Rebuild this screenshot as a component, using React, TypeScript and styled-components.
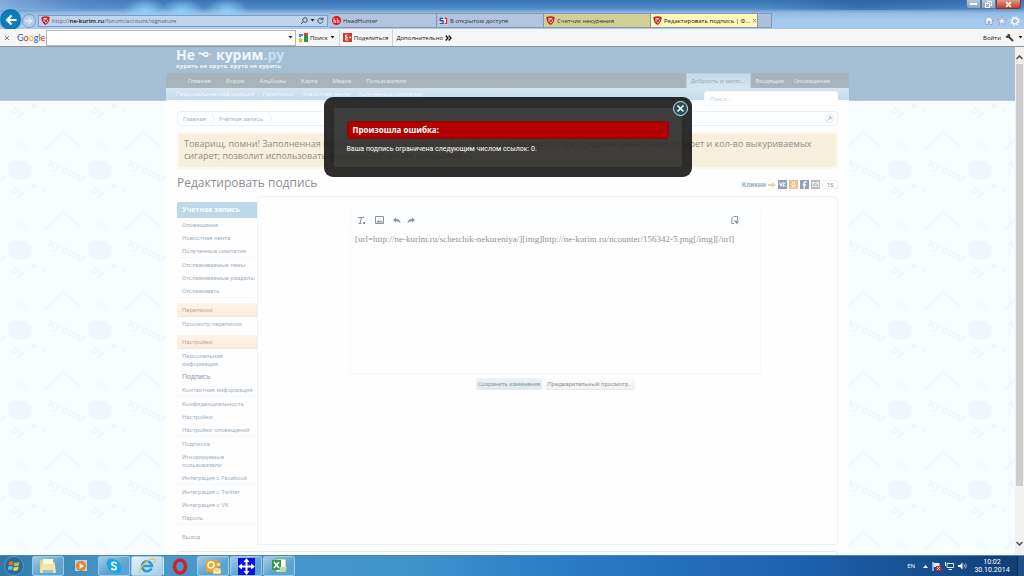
import React from 'react';
import styled, { createGlobalStyle, css } from 'styled-components';

const ui = `"Open Sans", "Noto Sans", sans-serif`;
const site = `Roboto, "Open Sans", sans-serif`;

const GlobalStyle = createGlobalStyle`
  *, *::before, *::after { box-sizing: border-box; }
  body { margin: 0; font-family: ${ui}; font-size: 6px; line-height: 8px; color: #222; }
  button, input, textarea { font: inherit; color: inherit; margin: 0; padding: 0; border: 0; background: none; outline: 0; }
  ul { list-style: none; margin: 0; padding: 0; }
  a { color: inherit; text-decoration: none; }
  h1, h2, h3, p { margin: 0; font-size: inherit; font-weight: 400; }
  svg { display: block; flex: none; }
`;

const Desktop = styled.div`
  display: flex;
  flex-direction: column;
  height: 100vh;
  overflow: hidden;
`;

/* ---------- browser frame ---------- */

const Chrome = styled.header`
  background:
    radial-gradient(ellipse 22px 14px at 145px 12px, #8fd0f6 0, transparent 100%),
    radial-gradient(ellipse 22px 14px at 182px 12px, #8fd0f6 0, transparent 100%),
    radial-gradient(ellipse 22px 14px at 227px 12px, #8fd0f6 0, transparent 100%),
    linear-gradient(90deg, rgba(160, 190, 235, 0.7) 0, rgba(120, 165, 220, 0.3) 80px, transparent 180px, transparent 75%, rgba(20, 55, 120, 0.3) 84%, transparent 100%) 0 0 / 100% 10px no-repeat,
    linear-gradient(#3a74b4 0, #4c88c6 8px, #93bbe6 13px, #a5c8ee 20px, #a9c9ec 100%);
`;

const TitleBar = styled.div`
  display: flex;
  justify-content: flex-end;
  height: 13px;
  padding-right: 3px;
`;

const WindowButton = styled.button<{ $close?: boolean }>`
  display: flex;
  align-items: center;
  justify-content: center;
  width: ${p => (p.$close ? 25 : 15)}px;
  height: 9px;
  border: 1px solid ${p => (p.$close ? '#7c3a35' : '#5d7895')};
  border-top: 0;
  background: ${p => (p.$close ? 'linear-gradient(#e0988a, #c33f28)' : 'linear-gradient(#b4c8de, #86a3c4)')};
  &:first-child { border-radius: 0 0 0 3px; }
  &:last-child { border-radius: 0 0 3px 0; }
`;

const NavRow = styled.div`
  display: flex;
  align-items: center;
  height: 16px;
  padding-bottom: 1px;
`;

const BackButton = styled.button`
  width: 21px;
  height: 21px;
  flex: none;
  margin: -4px 0 -2px;
  border-radius: 50%;
  background: radial-gradient(#1888c4, #0b6aa8);
  box-shadow: 0 0 0 1px #7fb2dc;
  display: grid;
  place-items: center;
`;

const ForwardButton = styled.button`
  width: 14px;
  height: 14px;
  flex: none;
  margin: 0 2px 0 1px;
  border: 1px solid #7b98bb;
  border-radius: 50%;
  background: #b2cdec;
  display: grid;
  place-items: center;
`;

const AddressBar = styled.form`
  display: flex;
  align-items: center;
  gap: 2px;
  width: 290px;
  height: 12px;
  padding: 0 3px 0 2px;
  border: 1px solid #7d9dc4;
  background: #bfd4ed;
`;

const AddressField = styled.label`
  position: relative;
  flex: 1;
  height: 10px;
  line-height: 10px;
  font-size: 6px;
  color: #56657a;
  b { color: #111; font-weight: 600; }
  input { position: absolute; inset: 0; width: 100%; color: transparent; }
`;

const Tabs = styled.div`
  display: flex;
  margin-left: 2px;
  height: 15px;
`;

const Tab = styled.button<{ $tone?: 'olive' | 'active' }>`
  display: flex;
  align-items: center;
  gap: 2px;
  width: 107px;
  padding: 0 2px;
  border: 1px solid #8798b3;
  border-left-width: 0;
  background: #b3c5de;
  color: #2b2f38;
  text-align: left;
  white-space: nowrap;
  ${p => p.$tone === 'olive' && css`background: #d0d092;`}
  ${p => p.$tone === 'active' && css`background: #fdf8b8; color: #111;`}
`;

const NewTab = styled.button`
  width: 14px;
  border: 1px solid #8798b3;
  border-left: 0;
  background: #adc0dc;
`;

const Tools = styled.div`
  display: flex;
  gap: 3px;
  margin-left: auto;
  padding-right: 4px;
`;

const IconButton = styled.button`
  display: grid;
  place-items: center;
`;

const GoogleBar = styled.div`
  display: flex;
  align-items: center;
  height: 18px;
  padding: 0 1px 0 4px;
  border-bottom: 1px solid #8c969f;
  background: #f6f6f6;
  color: #111;
  white-space: nowrap;
`;

const GoogleLogo = styled.span`
  width: 27px;
  margin: 0 2px 0 7px;
  font-family: Lato, sans-serif;
  font-size: 9px;
  line-height: 12px;
`;

const Tint = styled.span<{ $c: string }>`
  color: ${p => p.$c};
`;

const GoogleField = styled.label`
  display: flex;
  align-items: center;
  width: 250px;
  height: 16px;
  padding-right: 2px;
  border: 1px solid #b4b8bc;
  background: #fff;
  input { flex: 1; }
`;

const BarButton = styled.button`
  display: flex;
  align-items: center;
  gap: 2px;
  height: 16px;
  padding: 0 4px 0 3px;
  border-right: 1px solid #d0d0d0;
  &:last-of-type { border: 0; }
`;

const SignIn = styled.div`
  display: flex;
  align-items: center;
  gap: 4px;
  margin-left: auto;
`;

/* ---------- page ---------- */

const Viewport = styled.div`
  flex: 1;
  display: flex;
  min-height: 0;
`;

const Page = styled.main`
  position: relative;
  flex: 1;
  overflow: hidden;
  background: #f8fdff;
`;

const Wallpaper = styled.svg`
  position: absolute;
  inset: 54px 0 0;
  width: 100%;
  height: 100%;
`;

const Band = styled.div`
  position: absolute;
  inset: 0 0 auto;
  height: 54px;
  background: #a4bfd4;
  border-bottom: 1px solid #b4cbdc;
`;

const Site = styled.div`
  position: relative;
  max-width: 683px;
  margin: 0 auto;
  font-family: ${site};
`;

const Logo = styled.div`
  height: 26px;
  padding: 0 10px;
  color: #f2f8fc;
`;

const LogoName = styled.div`
  display: flex;
  align-items: center;
  gap: 3px;
  font: 700 14px/15px ${ui};
  span { color: #c9e0f0; }
`;

const Slogan = styled.div`
  font: 700 6px/8px ${ui};
`;

const MainNav = styled.nav`
  display: flex;
  justify-content: space-between;
  height: 15px;
  padding: 0 19px 0 22px;
  border-radius: 3px 3px 0 0;
  background: #a8b4bc;
  color: #dde8ef;
  line-height: 15px;
  white-space: nowrap;
`;

const NavLinks = styled.div`
  display: flex;
  gap: 15px;
`;

const UserLinks = styled.div`
  display: flex;
  gap: 10px;
`;

const UserName = styled.a`
  width: 65px;
  margin-right: -5px;
  border: 1px solid #b9cfdd;
  border-bottom: 0;
  background: linear-gradient(#c4dae9, #d5e6f2);
  color: #8fa6b8;
  font-family: ${ui};
  text-align: center;
`;

const SubNav = styled.div`
  display: flex;
  justify-content: space-between;
  height: 12px;
  padding: 0 11px 0 10px;
  background: linear-gradient(#d5e6f2, #c4dced);
  color: #fcfeff;
  line-height: 12px;
`;

const SubLinks = styled.div`
  display: flex;
  gap: 8px;
  text-shadow: 0 0 1px #a9c4d8;
`;

const SearchBox = styled.input`
  position: relative;
  width: 134px;
  height: 15px;
  margin-top: 3px;
  padding: 2px 5px;
  border: 1px solid #f2f8fc;
  border-radius: 3px;
  background: #fff;
  font-style: italic;
  &::placeholder { color: #c8d2da; opacity: 1; }
`;

const Sheet = styled.div`
  padding: 11px 11px 0;
  background: #fefefe;
  height: 100vh;
`;

const Crumbs = styled.nav`
  display: flex;
  align-items: center;
  height: 15px;
  padding: 0 3px 0 5px;
  border: 1px solid #e8f1f7;
  border-radius: 3px;
  background: #fcfeff;
  color: #a4b8c8;
`;

const Crumb = styled.a`
  display: flex;
  align-items: center;
  gap: 5px;
  margin-right: 4px;
`;

const CrumbJump = styled.button`
  margin-left: auto;
  width: 9px;
  height: 9px;
  border: 1px solid #dfeaf2;
  border-radius: 50%;
  display: grid;
  place-items: center;
`;

const Notice = styled.p`
  margin-top: 6px;
  padding: 4px 5px 5px;
  border: 2px solid #fcf8ee;
  background: linear-gradient(#f8f0dc, #f5efdd);
  color: #8f8c86;
  font-family: ${ui};
  font-size: 9px;
  line-height: 12px;
  white-space: nowrap;
  overflow: hidden;
  a { color: #a9c3d6; }
`;

const TitleRow = styled.div`
  display: flex;
  align-items: center;
  justify-content: space-between;
  margin: 3px 0 2px;
  height: 22px;
`;

const Title = styled.h1`
  color: #8d9094;
  font-family: ${ui};
  font-size: 12px;
  line-height: 16px;
`;

const Share = styled.div`
  display: flex;
  align-items: center;
  gap: 2px;
  padding-top: 3px;
  color: #9bb2c6;
  font-size: 7px;
`;

const ShareButton = styled.button<{ $c: string }>`
  display: grid;
  place-items: center;
  width: 9px;
  height: 9px;
  background: ${p => p.$c};
`;

const ShareCount = styled.span`
  width: 16px;
  border: 1px solid #edf0f2;
  font-size: 6px;
  line-height: 7px;
  text-align: center;
  color: #888;
`;

const Columns = styled.div`
  display: flex;
  height: 349px;
`;

const Side = styled.aside`
  width: 80px;
  padding-top: 6px;
  color: #a3b3c2;
`;

const SideTitle = styled.h2`
  padding-left: 5px;
  border-radius: 2px 0 0 0;
  background: #bcd8e9;
  color: #fff;
  font-family: ${ui};
  font-size: 7px;
  font-weight: 700;
  line-height: 16px;
`;

const SideHeading = styled.h3`
  margin-top: 5px;
  padding-left: 5px;
  border-bottom: 1px solid #fbe3d0;
  background: linear-gradient(#fef4e9, #fdebdd);
  color: #c2ab98;
  line-height: 13px;
`;

const SideItem = styled.li<{ $current?: boolean }>`
  padding: 3px 0 2px 5px;
  &:nth-child(3n) { border-bottom: 1px solid #f5f9fc; }
  ${p => p.$current && css`font-size: 7px; color: #8fa0b0;`}
`;

const Logout = styled.a`
  display: block;
  margin-top: 8px;
  padding-left: 5px;
`;

const Content = styled.form`
  flex: 1;
  padding: 12px 76px 0 92px;
  border: 1px solid #e9f2f8;
  border-radius: 5px 5px 3px 0;
`;

const Editor = styled.div`
  border: 1px solid #f6fafc;
  border-bottom-color: #f1f5f8;
  height: 165px;
`;

const Toolbar = styled.div`
  display: flex;
  align-items: center;
  justify-content: space-between;
  height: 20px;
  padding: 0 21px 0 6px;
  background: #fbfdff;
`;

const ToolGroup = styled.div`
  display: flex;
  align-items: center;
  gap: 9px;
`;

const HistoryTools = styled.div`
  display: flex;
  gap: 6px;
`;

const EditorText = styled.textarea`
  display: block;
  width: 100%;
  height: 120px;
  padding: 3px 4px;
  resize: none;
  overflow: hidden;
  color: #929292;
  font: 9px/12px "Liberation Serif", serif;
`;

const Actions = styled.div`
  display: flex;
  justify-content: center;
  gap: 3px;
  margin-top: 4px;
`;

const ActionButton = styled.button<{ $primary?: boolean }>`
  height: 11px;
  padding: 0 2px;
  border-radius: 3px;
  background: ${p => (p.$primary ? 'linear-gradient(#eaf4f8, #dbe9f3)' : 'linear-gradient(#fcfcfc, #f1f1f1)')};
  box-shadow: 0 1px 1px #e3e8ec;
  color: #8d969e;
  white-space: nowrap;
`;

const Footer = styled.div`
  margin-top: 6px;
  height: 12px;
  border: 1px solid #e3eaf0;
  border-radius: 3px;
`;

const Dialog = styled.section`
  position: absolute;
  top: 50px;
  left: 0;
  right: 0;
  width: 368px;
  height: 80px;
  margin: 0 auto;
  padding: 11px 10px 10px;
  border-radius: 9px;
  background: rgba(14, 14, 14, 0.87);
  color: #fff;
`;

const DialogBody = styled.div`
  height: 59px;
  padding: 13px;
  background: rgba(110, 110, 106, 0.25);
`;

const DialogTitle = styled.h2`
  height: 18px;
  margin-bottom: 5px;
  padding-left: 5px;
  border: 1px solid #7c0c0c;
  border-radius: 3px;
  background: #b20000;
  font-size: 8px;
  font-weight: 700;
  line-height: 16px;
`;

const DialogText = styled.p`
  font-family: ${site};
  font-size: 7px;
  line-height: 10px;
  white-space: nowrap;
`;

const CloseButton = styled.button`
  position: absolute;
  top: 4px;
  right: 4px;
  width: 15px;
  height: 15px;
  border: 1px solid #dce8ec;
  border-radius: 50%;
  background: #23505c;
  display: grid;
  place-items: center;
`;

const Scrollbar = styled.div`
  display: flex;
  flex-direction: column;
  align-items: center;
  width: 9px;
  padding: 8px 0 9px;
  gap: 4px;
  background: #f1f1f1;
`;

const Thumb = styled.div`
  width: 7px;
  height: 422px;
  margin-bottom: auto;
  background: #cdcdcd;
`;

/* ---------- taskbar ---------- */

const Taskbar = styled.footer`
  display: flex;
  align-items: center;
  height: 21px;
  border-top: 1px solid #4c86b4;
  background: linear-gradient(90deg, #2f79a8 0, #4a9ac8 12%, #3f94cc 40%, #2a7cc4 55%, #1d61ae 78%, #17508f 90%, #103d74 100%);
  color: #fff;
`;

const Start = styled.button`
  display: grid;
  place-items: center;
  width: 32px;
  padding-right: 4px;
`;

const Task = styled.button<{ $open?: boolean; $active?: boolean }>`
  display: grid;
  place-items: center;
  width: 32px;
  height: 20px;
  margin-right: 1px;
  border: 1px solid transparent;
  ${p => p.$open && css`
    border-color: #9cc9e4;
    border-radius: 2px;
    background: linear-gradient(150deg, #a4cce4, #5ba3d0 60%);
  `}
  ${p => p.$active && css`
    background: linear-gradient(150deg, #e6f3fa, #a2cde6);
    box-shadow: 2px 0 0 -1px #cfe6f3;
  `}
`;

const Tray = styled.div`
  display: flex;
  align-items: center;
  gap: 4px;
  margin-left: auto;
`;

const Language = styled.span`
  margin-right: 4px;
`;

const Clock = styled.time`
  width: 42px;
  text-align: center;
  font-family: ${site};
  font-size: 7px;
  line-height: 8px;
`;

const ShowDesktop = styled.button`
  width: 7px;
  height: 20px;
  border-left: 1px solid #0b2c56;
  background: #1f4f86;
`;

/* ---------- drawings ---------- */

const Shield = () => (
  <svg width="9" height="9" viewBox="0 0 9 9">
    <path d="M.5 1Q4.500-.5 8.500 1Q9 6.500 4.500 9Q0 6.500.5 1Z" fill="#cc2118" />
    <path d="M2 2.500Q4 1 6.500 2.300L3 6Q2 4.500 2 2.500ZM7.300 3Q7.300 6 4.500 7.500L3.800 6.800Z" fill="#f0d8d0" />
    <path d="M1.500 2.600 6.500 6" stroke="#8d2018" strokeWidth=".8" />
  </svg>
);

const Arrow = () => (
  <svg width="5" height="3" viewBox="0 0 5 3"><path d="M.5 0h4L2.500 2.500Z" fill="#222" /></svg>
);

const BackArrow = ({ size, color }: { size: number; color: string }) => (
  <svg width={size} height={size} viewBox="0 0 12 12" fill="none" stroke={color} strokeWidth="2">
    <path d="M6.500 1.500 2 6l4.500 4.500M2 6h9.500" />
  </svg>
);

const Cross = ({ size, color, width = 1 }: { size: number; color: string; width?: number }) => (
  <svg width={size} height={size} viewBox="0 0 6 6" stroke={color} strokeWidth={width}><path d="M1 1 5 5M5 1 1 5" /></svg>
);

const Curl = ({ flip }: { flip?: boolean }) => (
  <svg width="8" height="7" viewBox="0 0 8 7">
    <path d={flip ? 'M8 3 5 .5V2Q1 2 .5 6Q2.500 4 5 4.200V5.500Z' : 'M0 3 3 .5V2Q7 2 7.500 6Q5.500 4 3 4.200V5.500Z'} fill="#8d9499" />
  </svg>
);

const tabs: { text: string; icon: 'hh' | 'sj' | 'shield'; tone?: 'olive' | 'active' }[] = [
  { text: 'HeadHunter', icon: 'hh' },
  { text: 'В открытом доступе', icon: 'sj' },
  { text: 'Счетчик некурения', icon: 'shield', tone: 'olive' },
  { text: 'Редактировать подпись | Ф...', icon: 'shield', tone: 'active' },
];

const TabIcon = ({ kind }: { kind: 'hh' | 'sj' | 'shield' }) => {
  if (kind === 'shield') return <Shield />;
  if (kind === 'hh')
    return (
      <svg width="9" height="9" viewBox="0 0 9 9">
        <circle cx="4.500" cy="4.500" r="4.500" fill="#e1121d" />
        <path d="M2 2v5M2 4.500h1.500V7M5.300 2v5M5.300 4.500h1.500V7" stroke="#fff" fill="none" strokeWidth=".8" />
      </svg>
    );
  return (
    <svg width="9" height="8" viewBox="0 0 9 8" fill="none" strokeWidth="1.400">
      <path d="M0 0h9v8H0Z" fill="#e6edf6" />
      <path d="M4.300 1.200H1.200V3.800H4V6.600H.5" stroke="#1c56a8" />
      <path d="M5.500 1.200H7.700V6.600H5.500" stroke="#d8262c" />
    </svg>
  );
};

const account = ['Оповещения', 'Новостная лента', 'Полученные симпатии', 'Отслеживаемые темы', 'Отслеживаемые разделы', 'Отслеживать'];
const settings = ['Персональная информация', 'Подпись', 'Контактная информация', 'Конфиденциальность', 'Настройки', 'Настройки оповещений', 'Подписка', 'Игнорируемые пользователи', 'Интеграция с Facebook', 'Интеграция с Twitter', 'Интеграция с VK', 'Пароль'];

const SideList = ({ items }: { items: string[] }) => (
  <ul>
    {items.map(t => (
      <SideItem key={t} $current={t === 'Подпись'}><a href="#item">{t}</a></SideItem>
    ))}
  </ul>
);

const BrowserFrame = () => (
  <>
    <Chrome>
      <TitleBar>
        <WindowButton aria-label="Свернуть"><svg width="7" height="3"><path d="M0 0h7v2H0Z" fill="#fff" /></svg></WindowButton>
        <WindowButton aria-label="Развернуть">
          <svg width="7" height="7" viewBox="0 0 7 7" fill="none" stroke="#fff"><path d="M2.500 2V.5h4v4H5M.5 2.500h4v4h-4Z" /></svg>
        </WindowButton>
        <WindowButton $close aria-label="Закрыть"><Cross size={7} color="#fff" width={1.4} /></WindowButton>
      </TitleBar>
      <NavRow>
        <BackButton aria-label="Назад"><BackArrow size={12} color="#fff" /></BackButton>
        <ForwardButton aria-label="Вперёд">
          <svg width="8" height="8" viewBox="0 0 12 12" fill="none" stroke="#dfeaf7" strokeWidth="2"><path d="M5.500 1.500 10 6l-4.500 4.500M10 6H.5" /></svg>
        </ForwardButton>
        <AddressBar>
          <Shield />
          <AddressField>
            http://<b>ne-kurim.ru</b>/forum/account/signature
            <input aria-label="Адрес" />
          </AddressField>
          <svg width="8" height="8" viewBox="0 0 8 8" fill="none" stroke="#3e5068"><circle cx="5" cy="3" r="2.300" /><path d="M3.300 4.700.8 7.200" /></svg>
          <Arrow />
          <svg width="7" height="7" viewBox="0 0 7 7" fill="none" stroke="#3e5068"><path d="M5.800 2.500A2.600 2.600 0 1 0 6 4.300M6 .3V2.700H3.700" /></svg>
        </AddressBar>
        <Tabs>
          {tabs.map(t => (
            <Tab key={t.text} $tone={t.tone}>
              <TabIcon kind={t.icon} />
              {t.text}
              {t.tone === 'active' && <Cross size={5} color="#777" />}
            </Tab>
          ))}
          <NewTab aria-label="Новая вкладка" />
        </Tabs>
        <Tools>
          <IconButton aria-label="Домой"><svg width="10" height="9" viewBox="0 0 10 9" fill="#f2f6fb" stroke="#7890ae" strokeWidth=".6"><path d="M5 .5 9.500 4.500H8.200V8.500H6V5.500H4V8.500H1.800V4.500H.5Z" /></svg></IconButton>
          <IconButton aria-label="Избранное"><svg width="10" height="9" viewBox="0 0 10 9" fill="#f2f6fb" stroke="#7890ae" strokeWidth=".6"><path d="M5 .4 6.200 3.400 9.600 3.500 7 5.500 7.900 8.600 5 6.900 2.100 8.600 3 5.500.4 3.500 3.800 3.400Z" /></svg></IconButton>
          <IconButton aria-label="Сервис"><svg width="10" height="10" viewBox="0 0 10 10" fill="none"><circle cx="5" cy="5" r="4" stroke="#f2f6fb" strokeWidth="1.400" strokeDasharray="1.600 1.540" /><circle cx="5" cy="5" r="2.600" stroke="#f2f6fb" strokeWidth="1.700" /><circle cx="5" cy="5" r="1.500" stroke="#7890ae" strokeWidth=".5" /></svg></IconButton>
        </Tools>
      </NavRow>
    </Chrome>
    <GoogleBar>
      <IconButton aria-label="Закрыть панель"><Cross size={6} color="#666" width={0.8} /></IconButton>
      <GoogleLogo>
        <Tint $c="#2a5bd0">G</Tint><Tint $c="#d8301e">o</Tint><Tint $c="#e9b010">o</Tint><Tint $c="#2a5bd0">g</Tint><Tint $c="#2a9a3a">l</Tint><Tint $c="#d8301e">e</Tint>
      </GoogleLogo>
      <GoogleField><input aria-label="Поиск Google" /><Arrow /></GoogleField>
      <BarButton>
        <svg width="9" height="9" viewBox="0 0 9 9"><path d="M0 1h4v3H0Z" fill="#3b8ae8" /><path d="M5 0h4v3H5Z" fill="#e23c2a" /><path d="M0 5h3v4H0Z" fill="#f2b90e" /><path d="M5 3h4v6H5Z" fill="#1f9a45" /><path d="M2 3h3v3H2Z" fill="#fff" /></svg>
        Поиск<Arrow />
      </BarButton>
      <BarButton>
        <svg width="9" height="9" viewBox="0 0 9 9"><path d="M0 0h9v9H0Z" fill="#d03a28" /><path d="M4.500 2H2.500v2h2v1h-2v2h3M6.200 4.500h2M7.200 3.500v2" fill="none" stroke="#fff" strokeWidth=".9" /></svg>
        Поделиться
      </BarButton>
      <BarButton>
        Дополнительно
        <svg width="7" height="6" viewBox="0 0 7 6" fill="none" stroke="#111" strokeWidth="1.300"><path d="M.7.5 3 3 .7 5.500M3.700.5 6 3 3.700 5.500" /></svg>
      </BarButton>
      <SignIn>
        <a href="#signin">Войти</a>
        <svg width="9" height="9" viewBox="0 0 9 9"><circle cx="3" cy="3" r="2.300" fill="#444" /><path d="M3 3 8 8" stroke="#444" strokeWidth="2" /><path d="M0 0 3 .5 2.500 2.500.5 3Z" fill="#f6f6f6" /></svg>
        <Arrow />
      </SignIn>
    </GoogleBar>
  </>
);

const WallpaperTile = () => (
  <Wallpaper aria-hidden="true">
    <defs>
      <pattern id="tile" width="80" height="80" patternUnits="userSpaceOnUse">
        <path d="M45 48 63 31 83 48" fill="none" stroke="#f1f7fa" strokeWidth="3" />
        <path d="M9 62q5-4 10-2q8-2 10 3q6 3 2 9q1 6-6 5q-6 4-10 0q-8 0-6-7q-3-4 0-8Z" fill="#eff6fe" />
        <g fill="#eff6f9" fontFamily="Open Sans, sans-serif" fontWeight="700">
          <text transform="translate(47 64) rotate(27)" fontSize="12">курим</text>
          <text transform="translate(-33 64) rotate(27)" fontSize="12">курим</text>
          <text transform="translate(8 9) rotate(27)" fontSize="11">.ру</text>
          <text transform="translate(15 44) rotate(27)" fontSize="9" fill="#f2f9fc">Не</text>
        </g>
        <path d="M34 2l4 3-4 3-4-3ZM42 7l5 2-3 3Z" fill="#f0f7fb" />
      </pattern>
    </defs>
    <rect width="100%" height="100%" fill="url(#tile)" />
  </Wallpaper>
);

const ForumPage = () => (
  <Page>
    <WallpaperTile />
    <Band />
    <Site>
      <Logo>
        <LogoName>
          Не
          <svg width="15" height="7" viewBox="0 0 14 7" fill="none" stroke="#f4f8fa" strokeWidth="1.600"><path d="M0 2.500Q3 2 5 4T9 4.500Q10.500 2.500 8 1.800T5 4" /><path d="M9.500 3.500H13.500" stroke="#e4cfae" /></svg>
          <div>курим<span>.ру</span></div>
        </LogoName>
        <Slogan>курить не круто, круто не курить</Slogan>
      </Logo>
      <MainNav>
        <NavLinks>
          {['Главная', 'Форум', 'Альбомы', 'Карта', 'Медиа', 'Пользователи'].map(t => <a key={t} href="#nav">{t}</a>)}
        </NavLinks>
        <UserLinks>
          <UserName href="#user">Добрость и мило...</UserName>
          <a href="#inbox">Входящие</a><a href="#alerts">Оповещения</a>
        </UserLinks>
      </MainNav>
      <SubNav>
        <SubLinks>
          {['Персональная информация', 'Переписки', 'Новостная лента', 'Полученные симпатии'].map(t => <a key={t} href="#sub">{t}</a>)}
        </SubLinks>
        <SearchBox aria-label="Поиск" placeholder="Поиск..." />
      </SubNav>
      <Sheet>
        <Crumbs>
          {['Главная', 'Учётная запись'].map(t => (
            <Crumb key={t} href="#crumb">{t}<svg width="4" height="11" viewBox="0 0 4 11" fill="none" stroke="#e6eff5"><path d="M.5.5 3.500 5.500.5 10.500" /></svg></Crumb>
          ))}
          <CrumbJump aria-label="Перейти"><svg width="5" height="5" viewBox="0 0 5 5" stroke="#8fa3b2" fill="none" strokeWidth=".8"><path d="M.5 4.500 4 1M1.500 1H4V3.500" /></svg></CrumbJump>
        </Crumbs>
        <Notice>
          Товарищ, помни! Заполненная <a href="#info">персональная информация</a>: дата отказа от курения; стаж; средняя цена пачки сигарет и кол-во выкуриваемых<br />
          сигарет; позволит использовать форумный счетчик некурения.
        </Notice>
        <TitleRow>
          <Title>Редактировать подпись</Title>
          <Share>
            <b>Кликни</b>
            <svg width="8" height="6" viewBox="0 0 8 6"><path d="M0 2h4V.3L8 3 4 5.700V4H0Z" fill="#f7cd96" /></svg>
            <ShareButton $c="#8ba3b9" aria-label="VK"><svg width="7" height="5" viewBox="0 0 7 5" fill="none" stroke="#fff"><path d="M.5.5 2 4.200 3.200.5M4.200 0v5M6.500.3 4.500 2.500 6.700 4.700" /></svg></ShareButton>
            <ShareButton $c="#f4bd8a" aria-label="OK"><svg width="5" height="7" viewBox="0 0 5 7" fill="none" stroke="#fff"><circle cx="2.500" cy="1.700" r="1.200" /><path d="M.5 4Q2.500 5 4.500 4M2.500 4.500.8 6.700M2.500 4.500 4.200 6.700" /></svg></ShareButton>
            <ShareButton $c="#8fa0c2" aria-label="Facebook"><svg width="5" height="8" viewBox="0 0 5 8" fill="none" stroke="#fff" strokeWidth="1.300"><path d="M4.500 1H3Q2.200 1 2.200 2V8M.7 4H4.200" /></svg></ShareButton>
            <ShareButton $c="#b4bcc0" aria-label="Почта"><svg width="7" height="5" viewBox="0 0 7 5" fill="none" stroke="#fff" strokeWidth=".8"><path d="M.4.4h6.200v4.200H.4ZL3.500 3 6.600.4" /></svg></ShareButton>
            <ShareCount>15</ShareCount>
          </Share>
        </TitleRow>
        <Columns>
          <Side>
            <SideTitle>Учетная запись</SideTitle>
            <SideList items={account} />
            <SideHeading>Переписки</SideHeading>
            <SideList items={['Просмотр переписки']} />
            <SideHeading>Настройки</SideHeading>
            <SideList items={settings} />
            <Logout href="#logout">Выход</Logout>
          </Side>
          <Content>
            <Editor>
              <Toolbar>
                <ToolGroup>
                  <svg width="9" height="9" viewBox="0 0 9 9" fill="none" stroke="#8d9499"><path d="M1 1.500h6M4.500 1.500 3 7.500M1.500 7.500h3M6 6l2 2M8 6 6 8" /></svg>
                  <svg width="9" height="8" viewBox="0 0 9 8" fill="none" stroke="#8d9499"><path d="M.5.5h8v7h-8Z" /><path d="M1 6.500 3.500 4 5 5.500 6.500 4.500 8 6.500Z" fill="#8d9499" stroke="none" /></svg>
                  <HistoryTools><Curl /><Curl flip /></HistoryTools>
                </ToolGroup>
                <svg width="8" height="9" viewBox="0 0 8 9" fill="none" stroke="#8d9499"><path d="M3 7.500H.8V2.500L2.800.5H6.500V4" /><path d="M3 4.500h5L6 8.500Z" fill="#8d9499" stroke="none" /></svg>
              </Toolbar>
              <EditorText aria-label="Подпись" defaultValue="[url=http://ne-kurim.ru/schetchik-nekureniya/][img]http://ne-kurim.ru/ncounter/156342-5.png[/img][/url]" />
            </Editor>
            <Actions>
              <ActionButton type="button" $primary>Сохранить изменения</ActionButton>
              <ActionButton type="button">Предварительный просмотр...</ActionButton>
            </Actions>
          </Content>
        </Columns>
        <Footer />
      </Sheet>
    </Site>
    <Dialog role="dialog" aria-label="Произошла ошибка">
      <DialogBody>
        <DialogTitle>Произошла ошибка:</DialogTitle>
        <DialogText>Ваша подпись ограничена следующим числом ссылок: 0.</DialogText>
      </DialogBody>
      <CloseButton aria-label="Закрыть"><Cross size={9} color="#fff" width={1.1} /></CloseButton>
    </Dialog>
  </Page>
);

const TaskbarRow = () => (
  <Taskbar>
    <Start aria-label="Пуск">
      <svg width="20" height="20" viewBox="0 0 20 20"><circle cx="10" cy="10" r="9.500" fill="#2c6a94" stroke="#80b4d0" strokeWidth=".6" /><path d="M5 6Q7.500 4.500 9.500 6L9 9.500Q7 8.300 4.500 9.500Z" fill="#ea6a32" /><path d="M10.500 6.300Q13 7.500 15.500 6L14.800 9.500Q12.500 10.800 10 9.700Z" fill="#9ccb4c" /><path d="M4.300 10.500Q7 9.300 8.800 10.500L8.200 14Q6 12.800 3.700 14Z" fill="#6ab9ec" /><path d="M9.800 10.800Q12 12 14.500 10.500L14 14Q11.500 15.500 9.200 14.300Z" fill="#f8d04c" /></svg>
    </Start>
    <Task $open aria-label="Проводник"><svg width="18" height="16" viewBox="0 0 18 16"><path d="M1 2h6l1 2h8v11H1Z" fill="#e9cf77" /><path d="M4 1h10v5H4Z" fill="#fff8dc" /><path d="M2 6h14l1 9H1Z" fill="#f6e5a0" /><path d="M4 12h10v3H4Z" fill="#8ac4e4" /></svg></Task>
    <Task aria-label="Проигрыватель"><svg width="14" height="14" viewBox="0 0 14 14"><path d="M1 1h12v11H1Z" fill="#b9d1e0" /><circle cx="7" cy="7" r="5" fill="#ef7e24" /><path d="M5.500 4 10 7 5.500 10Z" fill="#fff" /></svg></Task>
    <Task $open aria-label="Skype"><svg width="16" height="16" viewBox="0 0 16 16"><circle cx="8" cy="8" r="6.500" fill="#18a6e6" /><circle cx="5" cy="5" r="4.500" fill="#18a6e6" /><circle cx="11" cy="11" r="4.500" fill="#18a6e6" /><path d="M10.800 5.500Q8 3.500 6 5Q5 7 8 7.800T10 11Q8 12.500 5.200 10.500" fill="none" stroke="#fff" strokeWidth="1.600" /></svg></Task>
    <Task $open $active aria-label="Internet Explorer"><svg width="18" height="16" viewBox="0 0 18 16" fill="none"><path d="M13.500 10.500A5 5 0 1 1 14 8H5" stroke="#2b9ade" strokeWidth="2.600" /><path d="M2 15Q0 12 6 6T16 1Q18 2 15.500 5" stroke="#ecc03c" strokeWidth="1.300" /></svg></Task>
    <Task aria-label="Opera"><svg width="16" height="17" viewBox="0 0 16 17"><ellipse cx="8" cy="8.500" rx="5.500" ry="6.500" fill="none" stroke="#d0202c" strokeWidth="3.500" /></svg></Task>
    <Task $open aria-label="Outlook"><svg width="17" height="17" viewBox="0 0 17 17"><path d="M1 2h11v12H1Z" fill="#f3a21e" /><circle cx="6" cy="7" r="3" fill="none" stroke="#fff" strokeWidth="1.600" /><path d="M8 10h8v6H8Z" fill="#fdf0c4" stroke="#d99a2c" strokeWidth=".6" /><path d="M8 10 12 13.500 16 10" fill="none" stroke="#d99a2c" strokeWidth=".8" /><circle cx="13.500" cy="6.500" r="2" fill="#f9d27a" /></svg></Task>
    <Task $open aria-label="Стрелки"><svg width="17" height="17" viewBox="0 0 17 17"><path d="M0 0h17v17H0Z" fill="#0a10e0" /><path d="M8.500 0 11.500 4H9.500V7.500H13V5.500L17 8.500 13 11.500V9.500H9.500V13H11.500L8.500 17 5.500 13H7.500V9.500H4V11.500L0 8.500 4 5.500V7.500H7.500V4H5.500Z" fill="#fff" /></svg></Task>
    <Task $open aria-label="Excel"><svg width="17" height="16" viewBox="0 0 17 16"><path d="M5 1h10v13H5Z" fill="#f4f9f2" stroke="#6ca56a" strokeWidth=".7" /><path d="M1 2h9v10H1Z" fill="#3d9346" /><path d="M3 4 8 10M8 4 3 10" stroke="#fff" strokeWidth="1.500" /><path d="M9 9h7l-2 5H8Z" fill="#b9dcb2" /></svg></Task>
    <Tray>
      <Language>EN</Language>
      <svg width="5" height="3" viewBox="0 0 5 3"><path d="M0 3h5L2.500 0Z" fill="#fff" /></svg>
      <svg width="9" height="9" viewBox="0 0 9 9"><path d="M1 0v9" stroke="#fff" /><path d="M1.500 1h6v4h-6Z" fill="#e8edf4" /><path d="M4 4h5v5H4Z" fill="#d8262c" /><path d="M5 5l3 3M8 5 5 8" stroke="#fff" strokeWidth=".8" /></svg>
      <svg width="9" height="8" viewBox="0 0 9 8" fill="none" stroke="#e8edf4"><path d="M2 1.500h6.500v4H2ZM3.500 7.500H7M.5 0v4" /></svg>
      <svg width="9" height="8" viewBox="0 0 9 8"><path d="M0 3h2L4.500.5v7L2 5H0Z" fill="#fff" /><path d="M6 2.500Q7 4 6 5.500M7.500 1.500Q9 4 7.500 6.500" fill="none" stroke="#c7d6e6" strokeWidth=".8" /></svg>
      <Clock>10:02<br />30.10.2014</Clock>
      <ShowDesktop aria-label="Свернуть все окна" />
    </Tray>
  </Taskbar>
);

export default function App() {
  return (
    <Desktop>
      <GlobalStyle />
      <BrowserFrame />
      <Viewport>
        <ForumPage />
        <Scrollbar>
          <svg width="7" height="5" viewBox="0 0 7 5" fill="none" stroke="#505050" strokeWidth="1.500"><path d="M.5 4 3.500 1 6.500 4" /></svg>
          <Thumb />
          <svg width="7" height="5" viewBox="0 0 7 5" fill="none" stroke="#505050" strokeWidth="1.500"><path d="M.5 1 3.500 4 6.500 1" /></svg>
        </Scrollbar>
      </Viewport>
      <TaskbarRow />
    </Desktop>
  );
}
